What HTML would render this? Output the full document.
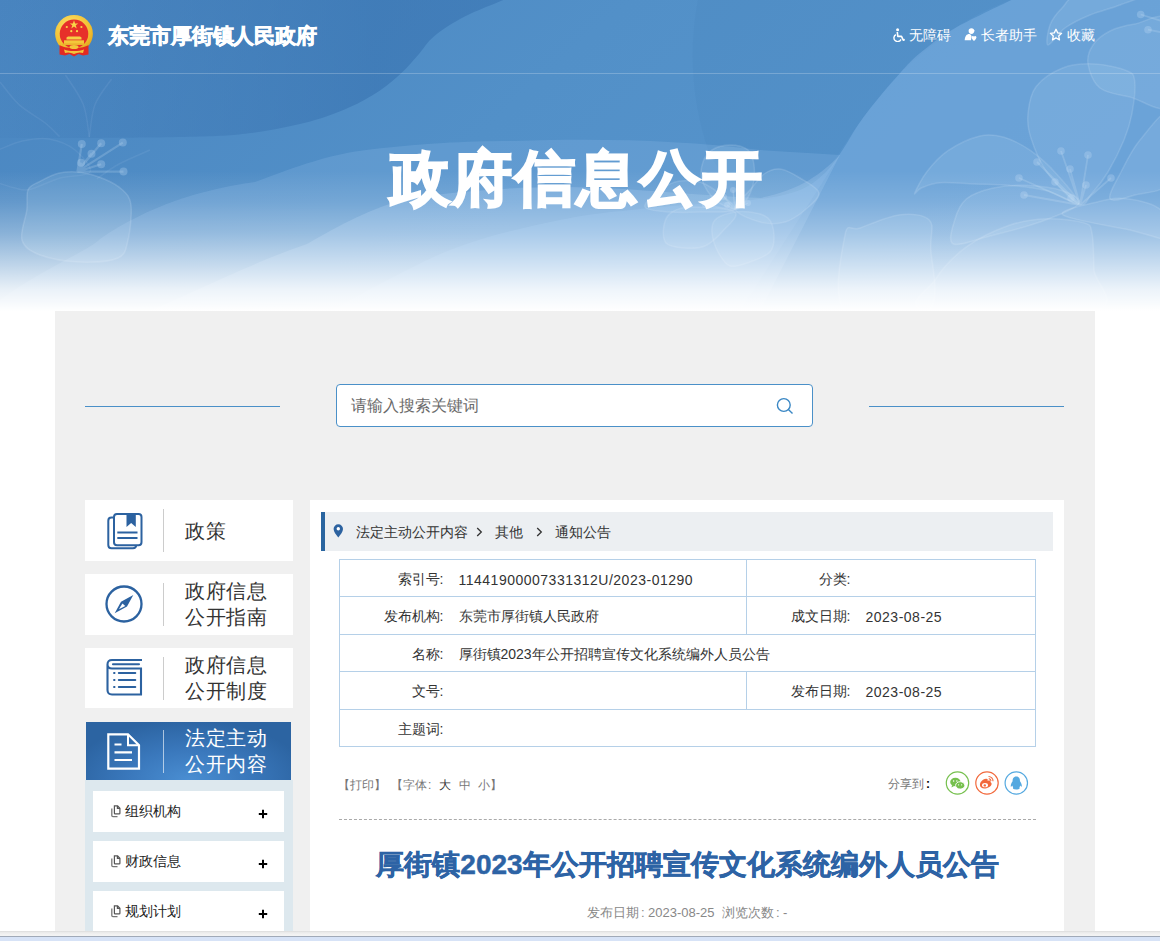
<!DOCTYPE html>
<html><head><meta charset="utf-8">
<style>
*{margin:0;padding:0;box-sizing:border-box}
html,body{width:1160px;height:941px;overflow:hidden;background:#fff;font-family:"Liberation Sans",sans-serif;color:#333}
.abs{position:absolute}
#banner{position:absolute;left:0;top:0;width:1160px;height:311px;overflow:hidden;
 background:#fff}
#hline{position:absolute;left:0;top:73px;width:1160px;height:1px;background:rgba(255,255,255,.22)}
.site{position:absolute;left:108px;top:21px;font-size:21px;font-weight:bold;color:#fff;line-height:30px;letter-spacing:-0.1px;-webkit-text-stroke:0.7px #fff}
.tl{position:absolute;top:26px;font-size:14px;color:#fff;line-height:18px;white-space:nowrap}
.bigt{position:absolute;left:390px;top:141px;font-size:60px;font-weight:900;color:#fff;line-height:76px;letter-spacing:2.4px;-webkit-text-stroke:2.2px #fff}
#main{position:absolute;left:55px;top:311px;width:1040px;height:630px;background:#f0f0f0}
.sline{position:absolute;top:406px;width:195px;height:1px;background:#4a90c8}
.search{position:absolute;left:336px;top:384px;width:477px;height:43px;border:1px solid #4a90c8;border-radius:4px;background:#fff}
.search span{position:absolute;left:14px;top:11px;font-size:16px;color:#6a6a6a;line-height:20px}
.nav{position:absolute;left:85px;width:208px;height:61px;background:#fff}
.nav .dv{position:absolute;left:78px;top:9px;width:1px;height:43px;background:#ccc}
.nav .tx{position:absolute;left:100px;font-size:20px;color:#333;line-height:25.5px}
#right{position:absolute;left:310px;top:500px;width:754px;height:441px;background:#fff}
.crumb{position:absolute;left:321px;top:512px;width:732px;height:39px;background:#eceff2;border-left:4px solid #2a65a0}
.crumb span{position:absolute;top:11px;font-size:14px;line-height:18px;color:#333}
table.info{position:absolute;left:339px;top:559px;width:696px;border-collapse:collapse;table-layout:fixed;font-size:14px;color:#333}
table.info tr{border:1px solid #b5d0e8}table.info td{padding:3px 0 0 0;border:0}table.info td.sep{border-left:1px solid #b5d0e8}
table.info td.l{text-align:right;padding-right:8px}
table.info td.v{padding-left:7px}table.info .n{letter-spacing:0.5px}
.sub{position:absolute;left:93px;width:191px;height:41px;background:#fff}
.sub .ic{position:absolute;left:17px;top:14px}
.sub .t{position:absolute;left:32px;top:11px;font-size:14px;line-height:18px;color:#222}
.sub .p{position:absolute;left:165px;top:18px}
.pr{position:absolute;top:777px;font-size:12px;color:#777;line-height:16px;white-space:nowrap}
.dt{position:absolute;top:904px;font-size:13px;color:#888;line-height:18px;white-space:nowrap}
</style></head><body>
<div id="banner">
 <svg class="abs" style="left:0;top:0" width="1160" height="311" viewBox="0 0 1160 311">
  <defs>
   <linearGradient id="fade" x1="0" y1="0" x2="0" y2="1">
    <stop offset="0" stop-color="#fff" stop-opacity="0"/>
    <stop offset="0.55" stop-color="#fff" stop-opacity="0"/>
    <stop offset="0.65" stop-color="#fff" stop-opacity="0.13"/>
    <stop offset="0.75" stop-color="#fff" stop-opacity="0.34"/>
    <stop offset="0.85" stop-color="#fff" stop-opacity="0.63"/>
    <stop offset="0.93" stop-color="#fff" stop-opacity="0.87"/>
    <stop offset="1" stop-color="#fff" stop-opacity="1"/>
   </linearGradient>
   <linearGradient id="wave" x1="0" y1="0" x2="500" y2="0" gradientUnits="userSpaceOnUse">
    <stop offset="0" stop-color="#3a74b1" stop-opacity="0.1"/>
    <stop offset="0.3" stop-color="#3a74b1" stop-opacity="0.35"/>
    <stop offset="0.75" stop-color="#3772b0" stop-opacity="0.6"/>
    <stop offset="1" stop-color="#3772b0" stop-opacity="0.55"/>
   </linearGradient>
   <linearGradient id="base" x1="0" y1="0" x2="1" y2="0.3">
    <stop offset="0" stop-color="#4a86c1"/>
    <stop offset="0.5" stop-color="#5290c8"/>
    <stop offset="1" stop-color="#5895cd"/>
   </linearGradient>
  </defs>
  <rect width="1160" height="311" fill="url(#base)"/>
  <path d="M503.4 0.0 C497.0 2.8 476.3 10.6 464.8 16.6 C453.3 22.6 442.3 29.5 434.5 35.9 C426.7 42.3 423.4 49.0 417.9 55.2 C412.4 61.4 407.8 67.1 401.4 73.1 C395.0 79.1 388.0 85.2 379.3 91.0 C370.6 96.8 360.5 102.5 349.0 107.6 C337.5 112.7 325.9 117.3 310.3 121.4 C294.7 125.5 273.6 129.9 255.2 132.4 C236.8 134.9 225.9 135.7 200.0 136.6 C174.1 137.5 133.3 137.8 100.0 138.0 C66.7 138.2 16.7 138.0 0.0 138.0 L0 0 Z" fill="url(#wave)"/>
  <path d="M698 0 C690 40 690 90 705 140 C715 175 740 195 770 200 C795 190 815 180 825.7 172.2 C835 160 850 135 858.3 124.4 C870 108 885 88 900.4 72.7 C915 58 935 42 953.9 28.7 C975 15 995 5 1011.3 0 Z" fill="#3f7ab6" opacity="0.12"/>
  <path d="M0 300 C40 270 90 250 100 239 C150 205 200 190 255 182 C300 165 330 155 359 151 C420 143 470 141 514 141 C600 138 680 140 760 150 L840 155 L740 311 Z" fill="#8dbbe6" opacity="0.26"/>
  <path d="M150 311 C220 280 260 260 307 244 C340 225 370 208 410 198 C470 190 520 187 565 187 C640 188 700 196 760 198 C800 190 820 175 840 155 L760 311 Z" fill="#a8cdef" opacity="0.28"/>
  <path d="M1011.3 0.0 C1001.7 4.8 969.2 19.8 953.9 28.7 C938.6 37.6 928.4 46.3 919.5 53.6 C910.6 60.9 907.4 65.0 900.4 72.7 C893.4 80.4 884.4 90.9 877.4 99.5 C870.4 108.1 864.0 116.1 858.3 124.4 C852.6 132.7 848.4 141.2 843.0 149.2 C837.6 157.2 832.9 165.4 825.7 172.2 C818.5 179.0 811.0 185.5 800.0 190.0 C789.0 194.5 776.7 196.7 760.0 199.0 C743.3 201.3 720.0 202.3 700.0 204.0 C680.0 205.7 663.3 206.3 640.0 209.0 C616.7 211.7 591.7 213.2 560.0 220.0 C528.3 226.8 488.3 234.8 450.0 250.0 C411.7 265.2 350.0 300.8 330.0 311.0 L1160 311 L1160 0 Z" fill="#8cbdec" opacity="0.36"/>
  <g fill="#c4def7" fill-opacity="0.13" stroke="#d8eafa" stroke-opacity="0.17" stroke-width="1.5">
<path d="M1078.7 204.0 C1071.2 200.4 1054.7 183.1 1046.7 172.0 C1038.7 160.9 1033.8 147.1 1030.7 137.3 C1027.6 127.5 1027.1 121.7 1028.0 113.3 C1028.9 104.9 1030.2 94.2 1036.0 86.7 C1041.8 79.2 1052.9 71.8 1062.7 68.0 C1072.5 64.2 1084.0 63.5 1094.7 64.0 C1105.4 64.5 1120.0 67.8 1126.7 70.7 C1133.4 73.6 1133.8 74.2 1134.7 81.3 C1135.6 88.4 1133.8 103.5 1132.0 113.3 C1130.2 123.1 1128.0 130.2 1124.0 140.0 C1120.0 149.8 1113.3 163.1 1108.0 172.0 C1102.7 180.9 1096.9 188.0 1092.0 193.3 C1087.1 198.6 1086.2 207.6 1078.7 204.0Z"/>
<path d="M914.7 193.3 C915.6 190.6 921.2 179.1 926.7 172.0 C932.2 164.9 939.1 156.7 948.0 150.7 C956.9 144.7 970.7 138.2 980.0 136.0 C989.3 133.8 995.5 134.9 1004.0 137.3 C1012.5 139.8 1021.8 144.5 1030.7 150.7 C1039.6 156.9 1049.3 165.8 1057.3 174.7 C1065.3 183.6 1080.5 201.3 1078.7 204.0 C1076.9 206.7 1058.3 193.8 1046.7 190.7 C1035.1 187.6 1021.3 186.4 1009.3 185.3 C997.3 184.2 986.2 184.4 974.7 184.0 C963.2 183.6 948.9 182.0 940.0 182.7 C931.1 183.4 925.5 186.2 921.3 188.0 C917.1 189.8 913.8 196.0 914.7 193.3Z"/>
<path d="M953.3 244.0 C947.4 241.3 952.5 227.6 954.7 220.0 C956.9 212.4 960.3 204.0 966.7 198.7 C973.1 193.4 983.5 190.2 993.3 188.0 C1003.1 185.8 1013.7 184.9 1025.3 185.3 C1036.9 185.8 1053.8 187.6 1062.7 190.7 C1071.6 193.8 1082.5 198.8 1078.7 204.0 C1074.9 209.2 1054.8 216.7 1040.0 222.0 C1025.2 227.3 1004.5 232.3 990.0 236.0 C975.5 239.7 959.2 246.7 953.3 244.0Z"/>
<path d="M926.7 311.0 C900.1 305.8 928.3 290.7 935.0 280.0 C941.7 269.3 954.3 255.8 966.7 246.7 C979.1 237.6 996.0 230.0 1009.3 225.3 C1022.6 220.6 1034.2 219.1 1046.7 218.7 C1059.2 218.3 1076.5 220.3 1084.0 222.7 C1091.5 225.1 1090.3 225.4 1092.0 233.3 C1093.7 241.2 1093.5 257.1 1094.0 270.0 C1094.5 282.9 1122.6 304.2 1094.7 311.0 C1066.8 317.8 953.3 316.2 926.7 311.0Z"/>
<path d="M1062.7 214.7 C1057.7 209.9 1089.3 204.0 1100.0 201.3 C1110.7 198.6 1116.7 197.4 1126.7 198.7 C1136.7 200.0 1152.0 202.4 1160.0 209.3 C1168.0 216.2 1180.0 236.6 1175.0 240.0 C1170.0 243.4 1148.7 234.2 1130.0 230.0 C1111.3 225.8 1067.7 219.5 1062.7 214.7Z"/>
<path d="M845.0 235.0 C847.5 221.2 850.8 231.4 860.0 228.0 C869.2 224.6 888.5 216.0 900.0 214.7 C911.5 213.4 924.2 214.7 929.3 220.0 C934.4 225.3 930.9 231.5 930.7 246.7 C930.5 261.9 942.3 300.3 928.0 311.0 C913.7 321.7 858.8 323.7 845.0 311.0 C831.2 298.3 842.5 248.8 845.0 235.0Z"/>
<path d="M1088.0 64.0 C1086.8 56.8 1089.3 50.5 1093.0 45.0 C1096.7 39.5 1103.0 34.5 1110.0 31.0 C1117.0 27.5 1125.0 25.5 1135.0 24.0 C1145.0 22.5 1164.2 8.7 1170.0 22.0 C1175.8 35.3 1176.7 91.5 1170.0 104.0 C1163.3 116.5 1141.7 99.7 1130.0 97.0 C1118.3 94.3 1107.0 93.5 1100.0 88.0 C1093.0 82.5 1089.2 71.2 1088.0 64.0Z"/><path d="M1048.0 45.0 C1045.5 44.5 1047.7 31.2 1050.0 25.0 C1052.3 18.8 1057.0 13.0 1062.0 8.0 C1067.0 3.0 1067.0 -2.8 1080.0 -5.0 C1093.0 -7.2 1133.3 -6.7 1140.0 -5.0 C1146.7 -3.3 1128.3 1.7 1120.0 5.0 C1111.7 8.3 1099.2 11.2 1090.0 15.0 C1080.8 18.8 1072.0 23.0 1065.0 28.0 C1058.0 33.0 1050.5 45.5 1048.0 45.0Z"/>
<path d="M1170.0 113.0 C1165.0 106.3 1148.2 130.2 1140.0 140.0 C1131.8 149.8 1126.0 162.2 1121.0 172.0 C1116.0 181.8 1107.7 194.9 1110.0 198.7 C1112.3 202.5 1125.0 198.1 1135.0 195.0 C1145.0 191.9 1164.2 193.7 1170.0 180.0 C1175.8 166.3 1175.0 119.7 1170.0 113.0Z"/>
<path d="M735.0 209.0 C730.0 208.7 720.5 204.8 715.0 200.0 C709.5 195.2 704.0 186.3 702.0 180.0 C700.0 173.7 701.3 167.0 703.0 162.0 C704.7 157.0 707.5 152.8 712.0 150.0 C716.5 147.2 724.0 145.0 730.0 145.0 C736.0 145.0 744.0 146.7 748.0 150.0 C752.0 153.3 753.2 159.2 754.0 165.0 C754.8 170.8 754.5 178.8 753.0 185.0 C751.5 191.2 748.0 198.0 745.0 202.0 C742.0 206.0 740.0 209.3 735.0 209.0Z"/>
<path d="M735.0 209.0 C733.3 203.7 745.2 195.8 750.0 190.0 C754.8 184.2 759.0 177.5 764.0 174.0 C769.0 170.5 774.0 168.3 780.0 169.0 C786.0 169.7 793.5 174.0 800.0 178.0 C806.5 182.0 818.2 187.7 819.0 193.0 C819.8 198.3 810.7 205.2 805.0 210.0 C799.3 214.8 792.5 220.0 785.0 222.0 C777.5 224.0 768.3 224.2 760.0 222.0 C751.7 219.8 736.7 214.3 735.0 209.0Z"/>
<path d="M645.0 207.0 C643.3 203.3 654.2 194.3 660.0 190.0 C665.8 185.7 672.5 182.0 680.0 181.0 C687.5 180.0 695.8 179.3 705.0 184.0 C714.2 188.7 735.8 204.3 735.0 209.0 C734.2 213.7 710.8 211.5 700.0 212.0 C689.2 212.5 679.2 212.8 670.0 212.0 C660.8 211.2 646.7 210.7 645.0 207.0Z"/>
<path d="M666.0 243.0 C662.7 239.2 663.0 230.2 664.0 225.0 C665.0 219.8 667.3 215.0 672.0 212.0 C676.7 209.0 681.5 207.0 692.0 207.0 C702.5 207.0 730.0 207.8 735.0 212.0 C740.0 216.2 727.0 226.3 722.0 232.0 C717.0 237.7 711.3 243.3 705.0 246.0 C698.7 248.7 690.5 248.5 684.0 248.0 C677.5 247.5 669.3 246.8 666.0 243.0Z"/>
<path d="M712.0 233.0 C711.5 227.7 712.0 223.3 715.0 220.0 C718.0 216.7 724.2 214.3 730.0 213.0 C735.8 211.7 743.7 211.2 750.0 212.0 C756.3 212.8 764.0 214.2 768.0 218.0 C772.0 221.8 773.7 229.3 774.0 235.0 C774.3 240.7 774.0 247.5 770.0 252.0 C766.0 256.5 756.7 259.7 750.0 262.0 C743.3 264.3 735.3 267.7 730.0 266.0 C724.7 264.3 721.0 257.5 718.0 252.0 C715.0 246.5 712.5 238.3 712.0 233.0Z"/>
<path d="M26.8 210.0 C27.8 201.7 26.0 194.7 28.0 190.0 C30.0 185.3 33.5 184.8 38.7 182.0 C44.0 179.2 52.3 174.6 59.5 173.0 C66.7 171.4 74.3 171.4 81.8 172.4 C89.2 173.4 97.5 176.2 104.2 179.0 C110.9 181.8 117.5 185.2 122.0 189.5 C126.5 193.8 130.0 196.6 131.0 205.0 C132.0 213.4 130.2 231.2 128.0 240.0 C125.8 248.8 126.0 254.3 118.0 258.0 C110.0 261.7 93.0 262.5 80.0 262.0 C67.0 261.5 49.7 258.7 40.0 255.0 C30.3 251.3 24.2 247.5 22.0 240.0 C19.8 232.5 25.8 218.3 26.8 210.0Z"/>
  </g>
  <g fill="none" stroke="#d8eafa" stroke-opacity="0.08" stroke-width="1.5"><path d="M0.0 183.5 C2.5 184.2 9.9 187.0 14.9 188.0 C19.9 189.0 22.3 191.2 29.8 189.5 C37.3 187.8 50.0 180.9 60.0 178.0 C70.0 175.1 87.5 176.7 90.0 172.0 C92.5 167.3 81.8 155.5 75.0 150.0 C68.2 144.5 57.8 140.5 49.0 139.0 C40.2 137.5 30.5 139.3 22.3 141.0 C14.1 142.7 3.7 147.9 0.0 149.3"/><path d="M150.0 150.0 C144.8 152.3 127.9 159.2 119.0 164.0 C110.1 168.8 100.4 176.5 96.7 179.0"/><path d="M0.0 82.0 C3.2 85.8 11.6 97.8 19.0 104.6 C26.4 111.3 37.9 117.2 44.6 122.5 C51.4 127.8 57.0 134.2 59.5 136.6"/><path d="M65.5 75.0 C68.5 79.9 79.3 94.2 83.3 104.6 C87.3 115.0 88.3 131.9 89.3 137.4"/><path d="M111.6 79.0 C108.8 83.3 98.7 94.9 95.0 104.6 C91.3 114.3 90.2 131.6 89.3 137.0"/></g>
  <g stroke="#cfe4f8" stroke-opacity="0.22" fill="#c5e0f8" fill-opacity="0.28">
<path d="M1080.0 205.0 L1061.0 151.0 M1080.0 205.0 L1088.0 155.0 M1080.0 205.0 L1037.0 162.0 M1080.0 205.0 L1070.0 169.0 M1080.0 205.0 L1019.0 178.0 M1080.0 205.0 L1055.0 182.0 M1080.0 205.0 L1086.0 185.0 M1080.0 205.0 L1024.0 195.0 M1080.0 205.0 L1071.0 198.0 M1080.0 205.0 L1111.0 178.0" fill="none" stroke-width="1.8"/><circle cx="1061.0" cy="151.0" r="3.8" stroke="none"/><circle cx="1088.0" cy="155.0" r="3.8" stroke="none"/><circle cx="1037.0" cy="162.0" r="3.8" stroke="none"/><circle cx="1070.0" cy="169.0" r="3.8" stroke="none"/><circle cx="1019.0" cy="178.0" r="3.8" stroke="none"/><circle cx="1055.0" cy="182.0" r="3.8" stroke="none"/><circle cx="1086.0" cy="185.0" r="3.8" stroke="none"/><circle cx="1024.0" cy="195.0" r="3.8" stroke="none"/><circle cx="1071.0" cy="198.0" r="3.8" stroke="none"/><circle cx="1111.0" cy="178.0" r="3.8" stroke="none"/><path d="M1140.7 14.5 L1165 22 M1148 29.7 L1165 33" fill="none" stroke-width="1.8"/><circle cx="1140.7" cy="14.5" r="3.8" stroke="none"/><circle cx="1148" cy="29.7" r="3.8" stroke="none"/><path d="M77.4 171.6 L81.8 144.0 M77.4 171.6 L101.2 143.3 M77.4 171.6 L122.8 142.6 M77.4 171.6 L91.5 153.8 M77.4 171.6 L101.2 164.2 M77.4 171.6 L81.1 162.7 M77.4 171.6 L123.5 171.6" fill="none" stroke-width="2.2"/><circle cx="81.8" cy="144.0" r="4.0" stroke="none"/><circle cx="101.2" cy="143.3" r="4.0" stroke="none"/><circle cx="122.8" cy="142.6" r="4.0" stroke="none"/><circle cx="91.5" cy="153.8" r="4.0" stroke="none"/><circle cx="101.2" cy="164.2" r="4.0" stroke="none"/><circle cx="81.1" cy="162.7" r="4.0" stroke="none"/><circle cx="123.5" cy="171.6" r="4.0" stroke="none"/><path d="M735.0 210.0 L733.0 190.0 M735.0 210.0 L724.0 197.0 M735.0 210.0 L748.0 203.0 M735.0 210.0 L705.0 205.0 M735.0 210.0 L727.0 205.0" fill="none" stroke-width="1.4"/><circle cx="733.0" cy="190.0" r="3.0" stroke="none"/><circle cx="724.0" cy="197.0" r="3.0" stroke="none"/><circle cx="748.0" cy="203.0" r="3.0" stroke="none"/><circle cx="705.0" cy="205.0" r="3.0" stroke="none"/><circle cx="727.0" cy="205.0" r="3.0" stroke="none"/>
  </g>
  <rect width="1160" height="311" fill="url(#fade)"/>
 </svg>
 <div id="hline"></div>
 <svg class="abs" style="left:55px;top:14px" width="38" height="43" viewBox="0 0 38 43">
  <defs><radialGradient id="gold" cx="0.4" cy="0.3" r="0.8"><stop offset="0" stop-color="#fde26a"/><stop offset="0.7" stop-color="#f0bd2c"/><stop offset="1" stop-color="#d9961c"/></radialGradient></defs>
  <circle cx="19" cy="19.8" r="18.9" fill="url(#gold)"/>
  <circle cx="19" cy="19.8" r="14.3" fill="#e7302a"/>
  <path d="M19 6.3 l1.1 3.1 3.2 0 -2.6 1.9 1 3.1 -2.7 -1.9 -2.7 1.9 1 -3.1 -2.6 -1.9 3.2 0z" fill="#f9d648"/>
  <circle cx="11.8" cy="13" r="1.1" fill="#f9d648"/><circle cx="26.4" cy="13" r="1.1" fill="#f9d648"/>
  <circle cx="16.3" cy="17.2" r="1.1" fill="#f9d648"/><circle cx="22" cy="17.2" r="1.1" fill="#f9d648"/>
  <path d="M11.5 25.5 L26.5 25.5 L26.5 23.5 L25 22.5 L13 22.5 L11.5 23.5 Z" fill="#f6cf45"/>
  <rect x="9" y="26.3" width="20" height="3.6" fill="#f3c73a"/>
  <rect x="7" y="29.8" width="24" height="1.2" fill="#e9b52c"/>
  <path d="M4.5 31 C8 33 11 34 19 34 C27 34 30 33 33.5 31 L33.5 40.5 L28 41.5 L23.5 40 L19 42.5 L14.5 40 L10 41.5 L4.5 40.5 Z" fill="#e22a22"/>
  <path d="M9 35.5 C12 36.5 15 37 19 37 C23 37 26 36.5 29 35.5 L28 39 C25 38 22 38.5 19 40 C16 38.5 13 38 10 39 Z" fill="#f3c43a"/>
  <ellipse cx="19" cy="33" rx="4.5" ry="2" fill="#f3c43a"/>
 </svg>
 <div class="site">东莞市厚街镇人民政府</div>
 <svg class="abs" style="left:893px;top:28px" width="13" height="14" viewBox="0 0 13 14">
  <circle cx="4.6" cy="1.8" r="1.5" fill="#fff"/>
  <path d="M4.3 4 L4.8 8.4 L8.5 8.4 L10.3 12.2 L11.8 11.6" fill="none" stroke="#fff" stroke-width="1.6" stroke-linejoin="round"/>
  <path d="M2.9 6.6 A3.7 3.7 0 1 0 8 11.4" fill="none" stroke="#fff" stroke-width="1.4"/>
 </svg>
 <span class="tl" style="left:909px">无障碍</span>
 <svg class="abs" style="left:964px;top:28px" width="14" height="14" viewBox="0 0 14 14">
  <circle cx="7.4" cy="3.1" r="2.8" fill="#fff"/>
  <path d="M6.5 3.2 L10.4 2.6" stroke="#fff" stroke-width="1.4"/>
  <path d="M0.7 12.3 C0.9 8 2.7 6 5.3 6 C6.5 6 7.2 7 7.6 8.3 L7 12.3 Z" fill="#fff"/>
  <path d="M7.6 9 C8.2 7.6 10 8 10 9.2 C10 8 11.9 7.6 12.4 9 C12.9 10.3 10.8 12.2 10 12.9 C9.2 12.2 7.1 10.3 7.6 9 Z" fill="#fff"/>
 </svg>
 <span class="tl" style="left:981px">长者助手</span>
 <svg class="abs" style="left:1049px;top:28px" width="14" height="14" viewBox="0 0 14 14">
  <path d="M7 1.3 L8.7 4.9 L12.6 5.3 L9.7 8 L10.5 11.9 L7 9.9 L3.5 11.9 L4.3 8 L1.4 5.3 L5.3 4.9 Z" fill="none" stroke="#fff" stroke-width="1.3" stroke-linejoin="round"/>
 </svg>
 <span class="tl" style="left:1067px">收藏</span>
 <div class="bigt">政府信息公开</div>
</div>
<div id="main"></div>
<div class="sline" style="left:85px"></div>
<div class="sline" style="left:869px"></div>
<div class="search"><span>请输入搜索关键词</span>
 <svg class="abs" style="left:439px;top:11px" width="20" height="20" viewBox="0 0 20 20"><circle cx="7.8" cy="9" r="6.4" fill="none" stroke="#3a87c4" stroke-width="1.4"/><path d="M12.4 13.6 L16.5 17.6" stroke="#3a87c4" stroke-width="1.4"/></svg>
</div>

<div class="nav" style="top:500px"><svg class="abs" style="left:22px;top:13px" width="36" height="37" viewBox="0 0 36 37">
 <path d="M6.5 4.5 L4.5 4.5 Q1.3 4.5 1.3 7.7 L1.3 32 Q1.3 35.2 4.5 35.2 L26 35.2 Q29 35.2 29.2 32.2" fill="none" stroke="#2c62a0" stroke-width="2"/>
 <rect x="7" y="1" width="27.5" height="31.3" rx="3" fill="#fff" stroke="#2c62a0" stroke-width="2"/>
 <path d="M19.5 1 L28.8 1 L28.8 14 L24.15 10 L19.5 14 Z" fill="#2c62a0"/>
 <path d="M10.3 19.5 L30.5 19.5 M10.3 25 L30.5 25" stroke="#2c62a0" stroke-width="2"/>
</svg><div class="dv"></div><div class="tx" style="top:19px;letter-spacing:0.5px">政策</div></div>
<div class="nav" style="top:574px"><svg class="abs" style="left:20px;top:11px" width="40" height="40" viewBox="0 0 40 40">
 <circle cx="19" cy="19" r="17.5" fill="none" stroke="#2c62a0" stroke-width="2.3"/>
 <path d="M28.3 10 L22 21.5 L9.7 28.2 L16 16.8 Z" fill="#2c62a0"/>
 <path d="M17.4 18.4 L20.3 20.9 L13.9 24.3 Z" fill="#fff"/>
</svg><div class="dv"></div><div class="tx" style="top:5px;letter-spacing:0.5px">政府信息<br>公开指南</div></div>
<div class="nav" style="top:648px;height:60px"><svg class="abs" style="left:21px;top:10px" width="38" height="38" viewBox="0 0 38 38">
 <path d="M36 2 L6 2 Q1.5 2 1.5 6.5 Q1.5 10.5 6 10.5 L35 10.5 L35 36.5 L6 36.5 Q1.5 36.5 1.5 32 L1.5 6.5" fill="none" stroke="#2c62a0" stroke-width="2.1"/>
 <path d="M7 6.3 L33 6.3" stroke="#2c62a0" stroke-width="2.1" stroke-linecap="round"/>
 <path d="M12.8 15 L29.3 15 M12.8 22 L29.3 22 M12.8 29 L29.3 29" stroke="#2c62a0" stroke-width="2" stroke-linecap="round"/>
 <rect x="7.3" y="14" width="2" height="2" fill="#2c62a0"/><rect x="7.3" y="21" width="2" height="2" fill="#2c62a0"/><rect x="7.3" y="28" width="2" height="2" fill="#2c62a0"/>
</svg><div class="dv"></div><div class="tx" style="top:5px;letter-spacing:0.5px">政府信息<br>公开制度</div></div>
<div class="abs" style="left:85px;top:780px;width:208px;height:161px;background:#dde8ee"></div>
<div class="nav" style="top:722px;left:86px;width:205px;height:58px;background:radial-gradient(ellipse 120px 60px at 50% 100%,#4a8ed2 0%,#3a78bc 50%,#2c64a2 100%)"><svg class="abs" style="left:21px;top:11px" width="34" height="37" viewBox="0 0 34 37">
 <path d="M1.3 1.3 L21 1.3 L32 12.3 L32 35.7 L1.3 35.7 Z" fill="none" stroke="#fff" stroke-width="2.2"/>
 <path d="M21 1.3 L21 12.3 L32 12.3" fill="none" stroke="#fff" stroke-width="2"/>
 <path d="M7.5 11.5 L14.5 11.5 M7.5 19.3 L25 19.3 M7.5 27 L25 27" stroke="#fff" stroke-width="2.2"/>
</svg><div class="dv" style="background:rgba(255,255,255,.6);left:77px;top:8px"></div><div class="tx" style="top:4px;color:#fff;left:99px;letter-spacing:0.5px">法定主动<br>公开内容</div></div>
<div class="sub" style="top:791px"><svg class="ic" width="12" height="13" viewBox="0 0 12 13"><path d="M1.8 3.5 L1.8 10.5 Q1.8 11.6 2.9 11.6 L7.5 11.6" fill="none" stroke="#777" stroke-width="1.3"/><path d="M4.4 0.9 L7.6 0.9 L9.9 3.2 L9.9 8.2 Q9.9 8.9 9.2 8.9 L5.1 8.9 Q4.4 8.9 4.4 8.2 Z M7.4 0.9 L7.4 3.4 L9.9 3.4" fill="none" stroke="#555" stroke-width="1.2"/></svg><div class="t">组织机构</div><svg class="p" width="10" height="10" viewBox="0 0 10 10"><path d="M0.8 5 L9.2 5 M5 0.8 L5 9.2" stroke="#000" stroke-width="2"/></svg></div>
<div class="sub" style="top:841px"><svg class="ic" width="12" height="13" viewBox="0 0 12 13"><path d="M1.8 3.5 L1.8 10.5 Q1.8 11.6 2.9 11.6 L7.5 11.6" fill="none" stroke="#777" stroke-width="1.3"/><path d="M4.4 0.9 L7.6 0.9 L9.9 3.2 L9.9 8.2 Q9.9 8.9 9.2 8.9 L5.1 8.9 Q4.4 8.9 4.4 8.2 Z M7.4 0.9 L7.4 3.4 L9.9 3.4" fill="none" stroke="#555" stroke-width="1.2"/></svg><div class="t">财政信息</div><svg class="p" width="10" height="10" viewBox="0 0 10 10"><path d="M0.8 5 L9.2 5 M5 0.8 L5 9.2" stroke="#000" stroke-width="2"/></svg></div>
<div class="sub" style="top:891px"><svg class="ic" width="12" height="13" viewBox="0 0 12 13"><path d="M1.8 3.5 L1.8 10.5 Q1.8 11.6 2.9 11.6 L7.5 11.6" fill="none" stroke="#777" stroke-width="1.3"/><path d="M4.4 0.9 L7.6 0.9 L9.9 3.2 L9.9 8.2 Q9.9 8.9 9.2 8.9 L5.1 8.9 Q4.4 8.9 4.4 8.2 Z M7.4 0.9 L7.4 3.4 L9.9 3.4" fill="none" stroke="#555" stroke-width="1.2"/></svg><div class="t">规划计划</div><svg class="p" width="10" height="10" viewBox="0 0 10 10"><path d="M0.8 5 L9.2 5 M5 0.8 L5 9.2" stroke="#000" stroke-width="2"/></svg></div>

<div id="right"></div>
<div class="crumb"><svg class="abs" style="left:8px;top:12px" width="11" height="14" viewBox="0 0 11 14"><path d="M5.3 13.5 C3 10.5 0.6 7.8 0.6 5 A4.7 4.7 0 0 1 10 5 C10 7.8 7.6 10.5 5.3 13.5 Z" fill="#2c62a0"/><circle cx="5.3" cy="4.7" r="1.7" fill="#fff"/></svg>
 <span style="left:31px">法定主动公开内容</span><svg class="abs" style="left:151px;top:15px" width="7" height="10" viewBox="0 0 7 10"><path d="M1.2 1 L5.3 5 L1.2 9" fill="none" stroke="#333" stroke-width="1.3"/></svg><span style="left:170px">其他</span><svg class="abs" style="left:211px;top:15px" width="7" height="10" viewBox="0 0 7 10"><path d="M1.2 1 L5.3 5 L1.2 9" fill="none" stroke="#333" stroke-width="1.3"/></svg><span style="left:230px">通知公告</span>
</div>
<table class="info">
<colgroup><col style="width:112px"><col style="width:295px"><col style="width:112px"><col style="width:177px"></colgroup>
<tr style="height:37px"><td class="l">索引号:</td><td class="v n">11441900007331312U/2023-01290</td><td class="l sep">分类:</td><td class="v"></td></tr>
<tr style="height:38px"><td class="l">发布机构:</td><td class="v">东莞市厚街镇人民政府</td><td class="l sep">成文日期:</td><td class="v n">2023-08-25</td></tr>
<tr style="height:37px"><td class="l">名称:</td><td class="v" colspan="3">厚街镇2023年公开招聘宣传文化系统编外人员公告</td></tr>
<tr style="height:38px"><td class="l">文号:</td><td class="v"></td><td class="l sep">发布日期:</td><td class="v n">2023-08-25</td></tr>
<tr style="height:37px"><td class="l">主题词:</td><td class="v" colspan="3"></td></tr>
</table>
<div class="pr" style="left:338px">【打印】</div>
<div class="pr" style="left:391px">【字体<span style="margin-left:1px">:</span></div>
<div class="pr" style="left:439px;color:#333">大</div>
<div class="pr" style="left:459px">中</div>
<div class="pr" style="left:478px">小】</div>
<div class="pr" style="left:888px;top:776px">分享到<span style="margin-left:2px;color:#000;font-weight:bold">:</span></div>
<svg class="abs" style="left:945px;top:771px" width="84" height="25" viewBox="0 0 84 25">
 <circle cx="12.5" cy="12" r="11.2" fill="#fff" stroke="#76c04e" stroke-width="1.2"/>
 <ellipse cx="10.4" cy="11" rx="5.2" ry="4.3" fill="#76c04e"/><path d="M7 14 L6.5 16.5 L9.5 14.8 Z" fill="#76c04e"/>
 <ellipse cx="15.2" cy="14.4" rx="4.6" ry="3.7" fill="#76c04e" stroke="#fff" stroke-width="0.9"/>
 <circle cx="8.6" cy="10" r="0.75" fill="#fff"/><circle cx="11.9" cy="10" r="0.75" fill="#fff"/>
 <circle cx="13.6" cy="13.8" r="0.6" fill="#fff"/><circle cx="16.6" cy="13.8" r="0.6" fill="#fff"/>
 <circle cx="42" cy="12" r="11.2" fill="#fff" stroke="#f2693c" stroke-width="1.2"/>
 <path d="M35 14.5 C34.5 11.5 37.5 8.2 41 7.8 C43 7.6 43 9.2 42.5 10 C44.5 9.2 46 9.6 45.6 11.2 C47.5 12 47 15.8 41.5 17.2 C37.5 18 35.4 16.5 35 14.5 Z" fill="#f2693c"/>
 <ellipse cx="40" cy="14.2" rx="3" ry="2.1" fill="#fff"/><circle cx="39.8" cy="14.4" r="1.2" fill="#f2693c"/>
 <path d="M43.5 5.5 A4.5 4.5 0 0 1 48 10.3 M43.8 7.6 A2.5 2.5 0 0 1 46 10" fill="none" stroke="#f2693c" stroke-width="1.1"/>
 <circle cx="71.3" cy="12" r="11.2" fill="#fff" stroke="#55a9e0" stroke-width="1.2"/>
 <path d="M71.3 5.6 C68.3 5.6 67.6 8.3 67.6 10.3 C66.5 11.8 65.5 13.8 65.8 15.8 C66.6 15.5 67.2 14.8 67.5 14.5 C67.8 16.5 68.8 17.3 67.8 17.8 C69.5 18.8 73.1 18.8 74.8 17.8 C73.8 17.3 74.8 16.5 75.1 14.5 C75.4 14.8 76 15.5 76.8 15.8 C77.1 13.8 76.1 11.8 75 10.3 C75 8.3 74.3 5.6 71.3 5.6 Z" fill="#55a9e0"/>
</svg>
<div class="abs" style="left:339px;top:819px;width:697px;height:0;border-top:1px dashed #aaa"></div>
<div class="abs" style="left:340px;top:846px;width:695px;text-align:center;font-size:28px;font-weight:bold;color:#2d63a5;line-height:38px;-webkit-text-stroke:0.5px #2d63a5">厚街镇2023年公开招聘宣传文化系统编外人员公告</div>
<div class="dt" style="left:587px">发布日期<span style="margin-left:2px">:</span></div>
<div class="dt" style="left:648px">2023-08-25</div>
<div class="dt" style="left:722px">浏览次数<span style="margin-left:2px">:</span></div>
<div class="dt" style="left:783px">-</div>
<div class="abs" style="left:0;top:931px;width:1160px;height:10px;background:linear-gradient(180deg,#d8d8d8 0,#e9e9e9 1px,#f4f4f4 4px,#f2f2f2 5px,#a4adba 5px,#9ca6b6 6px,#d7e3f7 6px)"></div>
</body></html>
